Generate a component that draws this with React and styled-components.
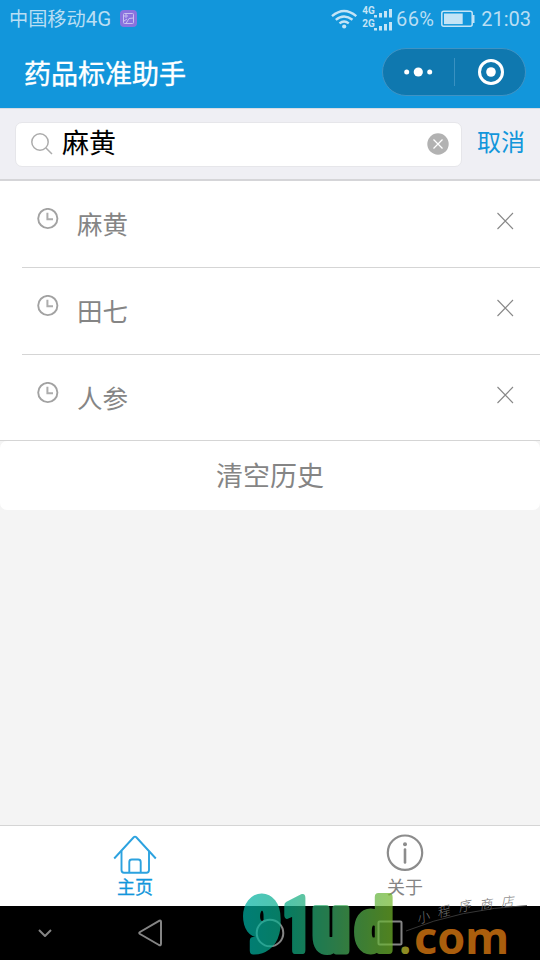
import React from "react";
import styled, { createGlobalStyle } from "styled-components";

const Global = createGlobalStyle`
  * { box-sizing: border-box; }
  body { margin: 0; }
  svg { display: block; flex: none; }
`;

const Screen = styled.div`
  position: relative;
  width: 540px;
  height: 960px;
  overflow: hidden;
  display: flex;
  flex-direction: column;
  background: #f4f4f4;
  font-family: Roboto, "Noto Sans CJK SC", sans-serif;
`;

const Header = styled.header`
  height: 108px;
  background: #1296db;
`;

const StatusBar = styled.div`
  height: 38px;
  display: flex;
  align-items: center;
  padding: 0 9px 0 9px;
  color: #b9def3;
  font-size: 20px;
  line-height: 38px;
`;

const Carrier = styled.span`
  width: 111px;
  padding-top: 1px;
  font-size: 19.2px;
  white-space: nowrap;
`;

const Network = styled.span`
  font-size: 20.5px;
`;

const PictureIcon = styled.svg`
  margin-bottom: 1px;
`;

const StatusRight = styled.div`
  margin-left: auto;
  display: flex;
  align-items: center;
`;

const Percent = styled.span`
  width: 46px;
  padding-left: 1px;
  letter-spacing: 0.4px;
`;

const Clock = styled.span`
  width: 56px;
  text-align: right;
  white-space: nowrap;
`;

const TitleBar = styled.div`
  height: 70px;
  display: flex;
  align-items: flex-start;
  justify-content: space-between;
  padding: 10px 14px 0 24px;
`;

const Title = styled.h1`
  margin: 0;
  color: #fff;
  font-size: 27px;
  font-weight: 400;
  line-height: 54px;
  -webkit-text-stroke: 0.4px #fff;
`;

const Capsule = styled.div`
  width: 144px;
  height: 48px;
  border: 1px solid #3f93c4;
  border-radius: 24px;
  background: #0f78af;
`;

const SearchBar = styled.div`
  height: 73px;
  display: flex;
  align-items: flex-start;
  padding: 13px 15px 0 15px;
  background: #efeff4;
  border-top: 1px solid #d5dbe3;
  border-bottom: 2px solid #d5d5d8;
`;

const Field = styled.div`
  width: 447px;
  height: 45px;
  display: flex;
  align-items: center;
  padding: 0 12px 2px 14px;
  border: 1px solid #e6e6ea;
  border-radius: 7px;
  background: #fff;
`;

const Query = styled.span`
  flex: 1;
  padding-left: 8px;
  color: #000;
  font-size: 27px;
  line-height: 40px;
`;

const Cancel = styled.button`
  border: 0;
  padding: 0;
  margin-left: auto;
  background: none;
  color: #1296db;
  font: 400 24px/43px Roboto, "Noto Sans CJK SC", sans-serif;
`;

const History = styled.ul`
  margin: 0;
  padding: 0;
  height: 260px;
  list-style: none;
  background: #fff;
  border-bottom: 1px solid #d5d5d5;
`;

const HistoryRow = styled.li`
  height: 87px;
  margin-left: 22px;
  padding: 27px 26px 0 15px;
  display: flex;
  align-items: flex-start;
  border-bottom: ${(p) => (p.$last ? "0" : "1px solid #d5d5d5")};
`;

const Term = styled.span`
  flex: 1;
  padding-left: 18px;
  font-size: 25.5px;
  line-height: 34px;
  color: #858585;
`;

const RemoveIcon = styled.svg`
  margin-top: 4px;
`;

const ClearButton = styled.button`
  height: 69px;
  flex: none;
  border: 0;
  border-radius: 7px;
  padding: 4px 0 0;
  background: #fff;
  color: #858585;
  font: 400 27px/65px Roboto, "Noto Sans CJK SC", sans-serif;
`;

const TabBar = styled.nav`
  margin-top: auto;
  height: 81px;
  display: flex;
  border-top: 1px solid #d5d5d5;
  background: #fff;
`;

const Tab = styled.div`
  flex: 1;
  display: flex;
  flex-direction: column;
  align-items: center;
  padding-top: 6px;
  color: ${(p) => (p.$active ? "#1296db" : "#858585")};
  font-size: 18px;
  line-height: 28px;
  -webkit-text-stroke: ${(p) => (p.$active ? "0.3px" : "0")};
`;

const SystemNav = styled.div`
  height: 54px;
  background: #000;
`;

const Watermark = styled.svg`
  position: absolute;
  left: 230px;
  top: 880px;
`;

const ClockIcon = () => (
  <svg width="22" height="22" viewBox="0 0 22 22" fill="none" stroke="#a2a2a2">
    <circle cx="10.800" cy="10.500" r="9.600" strokeWidth="1.900" />
    <path d="M10.400 4.800V11.300H16" strokeWidth="2" stroke="#adadad" />
  </svg>
);

const terms = ["麻黄", "田七", "人参"];

const markLetters = [
  { c: "9", x: 14, w: 36, size: 73 },
  { c: "1", x: 53, w: 28, size: 73 },
  { c: "u", x: 83, w: 36, size: 78 },
  { c: "d", x: 126, w: 36, size: 71 },
];

const scribble = [
  { c: "小", x: 188, y: 44, r: -18 },
  { c: "程", x: 208, y: 38, r: -15 },
  { c: "序", x: 229, y: 32, r: -12 },
  { c: "商", x: 250, y: 30, r: -8 },
  { c: "店", x: 271, y: 27, r: -5 },
];

export default function App() {
  return (
    <Screen>
      <Global />
      <Header>
        <StatusBar>
          <Carrier>中国移动<Network>4G</Network></Carrier>
          <PictureIcon width="17" height="17" viewBox="0 0 17 17" fill="none" stroke="#c9c3f0">
            <rect width="17" height="17" rx="4" fill="#8a72df" stroke="none" />
            <rect x="3.500" y="3.500" width="10" height="10" rx="1" />
            <path d="M6 13.500L9 8.500L13.500 8M4 11L7 9" />
            <circle cx="6" cy="6" r="1.200" />
          </PictureIcon>
          <StatusRight>
            <svg width="64" height="36" viewBox="331 0 64 36" fill="none" stroke="#c4e4f6">
              <g strokeWidth="2.400">
                <path d="M332 15.200Q344 4.800 356.300 15.200" />
                <path d="M335.800 18.800Q344 12 352.500 18.800" />
                <path d="M339.500 22.400Q344 18.800 348.800 22.400" />
              </g>
              <circle cx="344.200" cy="25.500" r="2.100" fill="#c4e4f6" stroke="none" />
              <g fill="#c4e4f6" stroke="none" fontFamily="Roboto, sans-serif" fontSize="10" fontWeight="700">
                <text x="362.300" y="12.500">4G</text>
                <text x="362.300" y="25.600">2G</text>
                <path d="M374 14h3v2.500h-3zM379 12h3v4.500h-3zM384 10h3v6.500h-3zM389 8h3v8.500h-3zM374 27h3v2.500h-3zM379 25h3v4.500h-3zM384 23h3v6.500h-3zM389 21h3v8.500h-3z" />
              </g>
            </svg>
            <Percent>66%</Percent>
            <svg width="34" height="18" viewBox="0 0 34 18" fill="none" stroke="#c4e4f6">
              <rect x="0.800" y="1.300" width="30.400" height="15" rx="2" strokeWidth="1.500" />
              <rect x="3" y="3.500" width="18.700" height="10.600" fill="#c4e4f6" stroke="none" />
              <path d="M32.500 5v8" strokeWidth="2" />
            </svg>
            <Clock>21:03</Clock>
          </StatusRight>
        </StatusBar>
        <TitleBar>
          <Title>药品标准助手</Title>
          <Capsule>
            <svg width="142" height="46" viewBox="1 1 142 46" fill="#fff">
              <circle cx="24.700" cy="24" r="2.500" />
              <circle cx="36.300" cy="24" r="4.600" />
              <circle cx="47.700" cy="24" r="2.500" />
              <path d="M72.500 10v28" stroke="#3991c1" />
              <circle cx="109" cy="24" r="11.500" fill="none" stroke="#fff" strokeWidth="3" />
              <circle cx="109" cy="24" r="4.800" />
            </svg>
          </Capsule>
        </TitleBar>
      </Header>
      <SearchBar>
        <Field>
          <svg width="24" height="24" viewBox="0 0 24 24" fill="none" stroke="#acacac" strokeWidth="1.500">
            <circle cx="10" cy="10" r="8.200" />
            <path d="M16 16L22 22" />
          </svg>
          <Query>麻黄</Query>
          <svg width="22" height="22" viewBox="0 0 22 22">
            <circle cx="11" cy="11" r="10.700" fill="#b2b2b2" />
            <path d="M6.500 6.500l9 9M15.500 6.500l-9 9" stroke="#fff" strokeWidth="1.300" />
          </svg>
        </Field>
        <Cancel>取消</Cancel>
      </SearchBar>
      <History>
        {terms.map((term, i) => (
          <HistoryRow key={term} $last={i === terms.length - 1}>
            <ClockIcon />
            <Term>{term}</Term>
            <RemoveIcon width="18" height="18" viewBox="0 0 18 18" stroke="#888" strokeWidth="1.100">
              <path d="M1.500 1l15.500 16M17 1L1.500 17" />
            </RemoveIcon>
          </HistoryRow>
        ))}
      </History>
      <ClearButton>清空历史</ClearButton>
      <TabBar>
        <Tab $active>
          <svg width="44" height="42" viewBox="113 832 44 42" fill="none" stroke="#2ca2df" strokeWidth="1.900">
            <path d="M114.200 858.500L133.500 837.500Q135 835.800 136.500 837.500L155.800 858.500" />
            <path d="M121.500 851V870Q121.500 872.700 124 872.700H146.500Q149 872.700 149 870V851" />
            <path d="M129.300 872V862Q129.300 859.500 131.800 859.500H138.200Q140.700 859.500 140.700 862V872" />
          </svg>
          主页
        </Tab>
        <Tab>
          <svg width="44" height="42" viewBox="383 832 44 42" fill="none" stroke="#8c8c8c" strokeWidth="2.200">
            <circle cx="405" cy="852.700" r="17.200" />
            <circle cx="405" cy="844.200" r="2" fill="#8c8c8c" stroke="none" />
            <path d="M405 849.500V862.500" strokeWidth="2.600" strokeLinecap="round" />
          </svg>
          关于
        </Tab>
      </TabBar>
      <SystemNav>
        <svg width="540" height="54" viewBox="0 906 540 54" fill="none" stroke="#858585" strokeWidth="2" strokeLinejoin="round">
          <path d="M39 930l6 6 6-6" />
          <path d="M159.500 920.700Q161 920 161 922V943.500Q161 946 159 945L140 934Q138.500 933 140 932Z" />
          <circle cx="270" cy="933" r="13.300" />
          <rect x="378.500" y="921.500" width="23" height="23" rx="1" />
        </svg>
      </SystemNav>
      <Watermark width="310" height="80" viewBox="0 0 310 80">
        <defs>
          <linearGradient id="mark" gradientUnits="userSpaceOnUse" x1="13" y1="0" x2="163" y2="0">
            <stop offset="0" stopColor="#00b2a6" />
            <stop offset="0.300" stopColor="#0cae88" />
            <stop offset="0.600" stopColor="#3bac67" />
            <stop offset="1" stopColor="#73b72b" />
          </linearGradient>
        </defs>
        <g opacity="0.710">
          <g fill="url(#mark)" stroke="url(#mark)" strokeWidth="8" strokeLinejoin="round" fontFamily="Roboto, sans-serif" fontWeight="900">
            {markLetters.map((l) => (
              <text key={l.c} x={l.x} y="69.500" fontSize={l.size} textLength={l.w} lengthAdjust="spacingAndGlyphs">{l.c}</text>
            ))}
          </g>
          <text x="169" y="73.500" fill="#c9c632" fontFamily="Noto Sans, sans-serif" fontWeight="700" fontSize="44">.</text>
          <text x="184" y="73.500" fill="#f08513" fontFamily="Noto Sans, sans-serif" fontWeight="700" fontSize="44" textLength="95" lengthAdjust="spacingAndGlyphs">com</text>
        </g>
        <g fill="#777" fontFamily="Noto Sans CJK SC, sans-serif" fontSize="13" fontWeight="300" fontStyle="italic">
          {scribble.map((s) => (
            <text key={s.c} x={s.x} y={s.y} transform={`rotate(${s.r} ${s.x} ${s.y})`}>{s.c}</text>
          ))}
        </g>
        <path d="M176 51Q230 29 297 25.500" fill="none" stroke="#444" strokeWidth="0.800" />
      </Watermark>
    </Screen>
  );
}
